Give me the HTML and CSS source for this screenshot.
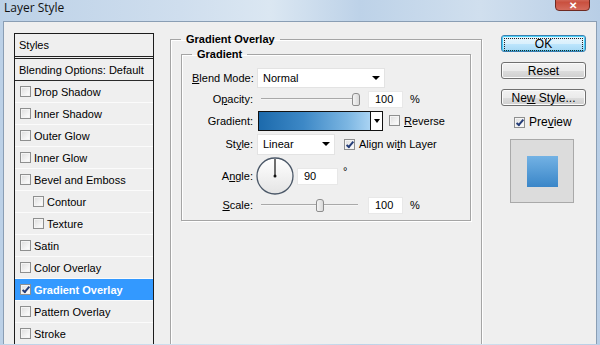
FILE: index.html
```html
<!DOCTYPE html>
<html>
<head>
    <title>Layer Style</title>
    <link rel="stylesheet" href="styles.css">
</head>
<body>
    <div class="window">
        <div class="titlebar">
            <span class="title">Layer Style</span>
            <div class="close-btn">&#x2715;</div>
        </div>

        <div class="client">
            <div class="styles-list">
                <div class="list-head">Styles</div>
                <div class="list-item blending">Blending Options: Default</div>
                <div class="list-item"><span class="cb"></span>Drop Shadow</div>
                <div class="list-item"><span class="cb"></span>Inner Shadow</div>
                <div class="list-item"><span class="cb"></span>Outer Glow</div>
                <div class="list-item"><span class="cb"></span>Inner Glow</div>
                <div class="list-item"><span class="cb"></span>Bevel and Emboss</div>
                <div class="list-item sub"><span class="cb"></span>Contour</div>
                <div class="list-item sub"><span class="cb"></span>Texture</div>
                <div class="list-item"><span class="cb"></span>Satin</div>
                <div class="list-item"><span class="cb"></span>Color Overlay</div>
                <div class="list-item selected"><span class="cb checked"></span>Gradient Overlay</div>
                <div class="list-item"><span class="cb"></span>Pattern Overlay</div>
                <div class="list-item"><span class="cb"></span>Stroke</div>
            </div>

            <fieldset class="group outer">
                <legend>Gradient Overlay</legend>
                <fieldset class="group inner">
                    <legend>Gradient</legend>

                    <div class="row row-blend">
                        <label class="lbl"><u>B</u>lend Mode:</label>
                        <div class="select select-blend"><span>Normal</span><span class="arrow"></span></div>
                    </div>

                    <div class="row row-opacity">
                        <label class="lbl">O<u>p</u>acity:</label>
                        <div class="slider"><span class="thumb" style="left: 94px"></span></div>
                        <div class="num">100</div>
                        <span class="unit">%</span>
                    </div>

                    <div class="row row-gradient">
                        <label class="lbl">Gradient:</label>
                        <div class="gradient-pick">
                            <div class="swatch"></div>
                            <div class="pick-arrow"><span class="arrow"></span></div>
                        </div>
                        <span class="cb reverse-cb"></span>
                        <span class="cb-text"><u>R</u>everse</span>
                    </div>

                    <div class="row row-style">
                        <label class="lbl">St<u>y</u>le:</label>
                        <div class="select select-style"><span>Linear</span><span class="arrow"></span></div>
                        <span class="cb checked align-cb"></span>
                        <span class="cb-text">Align wi<u>t</u>h Layer</span>
                    </div>

                    <div class="row row-angle">
                        <label class="lbl">A<u>n</u>gle:</label>
                        <svg class="dial" width="40" height="40" viewBox="0 0 40 40">
                            <defs>
                                <linearGradient id="dialFill" x1="0" y1="0" x2="0" y2="1">
                                    <stop offset="0" stop-color="#ffffff"/>
                                    <stop offset="1" stop-color="#e4e4e4"/>
                                </linearGradient>
                            </defs>
                            <circle cx="20" cy="20" r="18" fill="url(#dialFill)" stroke="#4b5868" stroke-width="1.3"/>
                            <line x1="20" y1="20" x2="20" y2="3" stroke="#111" stroke-width="1.2"/>
                            <circle cx="20" cy="20" r="1.5" fill="#111"/>
                        </svg>
                        <div class="num num-angle">90</div>
                        <span class="degree">&deg;</span>
                    </div>

                    <div class="row row-scale">
                        <label class="lbl"><u>S</u>cale:</label>
                        <div class="slider"><span class="thumb" style="left: 58px"></span></div>
                        <div class="num">100</div>
                        <span class="unit">%</span>
                    </div>
                </fieldset>
            </fieldset>

            <div class="actions">
                <button class="btn btn-default"><span class="focus">OK</span></button>
                <button class="btn">Reset</button>
                <button class="btn">Ne<u>w</u> Style...</button>
                <div class="preview-toggle">
                    <span class="cb checked"></span>
                    <span class="cb-text">Pre<u>v</u>iew</span>
                </div>
                <div class="preview-box">
                    <div class="preview-square"></div>
                </div>
            </div>
        </div>
    </div>
</body>
</html>
```

FILE: styles.css
```css
body {
    margin: 0;
    width: 600px;
    height: 345px;
    overflow: hidden;
    font-family: 'Liberation Sans', Arial, sans-serif;
    font-size: 11px;
    color: #000;
    background: #c6d8eb;
}

u {
    text-decoration: underline;
    text-underline-offset: 1px;
}

.window {
    height: 345px;
    box-sizing: border-box;
    background: linear-gradient(90deg, #bcd1e7 0%, #cfdeee 30%, #dbe7f2 45%, #bdd2e8 60%, #d0dfee 80%, #b8cee6 100%);
    padding: 0 3px;
}

.titlebar {
    height: 21px;
    position: relative;
}

.title {
    font-family: 'Open Sans', sans-serif;
    font-size: 12px;
    line-height: 16px;
    padding-left: 1px;
    color: #111;
}

.close-btn {
    position: absolute;
    right: 7px;
    top: -8px;
    width: 33px;
    height: 17px;
    border: 1px solid #6e2a22;
    border-radius: 0 0 4px 4px;
    background: linear-gradient(#e3a39a, #c9503f 55%, #d46b5c);
    color: #fff;
    font-size: 10px;
    font-weight: bold;
    line-height: 26px;
    text-align: center;
    overflow: hidden;
}

.client {
    display: flex;
    align-items: flex-start;
    height: 323px;
    box-sizing: border-box;
    border: 1px solid #8a9eb4;
    border-bottom: none;
    background: #efefef;
    padding: 11px 0 0 10px;
    overflow: hidden;
}

/* styles list */

.styles-list {
    width: 140px;
    flex: none;
    box-sizing: border-box;
    border: 1px solid #1c1c1c;
    border-bottom: none;
    background: #efefef;
    height: 311px;
    overflow: hidden;
}

.list-head {
    height: 22px;
    line-height: 22px;
    padding-left: 4px;
    border-bottom: 3px double #222;
}

.list-item {
    height: 21px;
    display: flex;
    align-items: center;
    padding-left: 5px;
    border-bottom: 1px solid #fbfbfb;
    white-space: nowrap;
}

.list-item.blending {
    padding-left: 4px;
    border-bottom: 1px solid #2a2a2a;
}

.list-item.sub {
    padding-left: 18px;
}

.list-item .cb {
    margin-right: 3px;
}

.list-item.selected {
    background: #3399ff;
    color: #fff;
    font-weight: bold;
}

.cb {
    display: inline-block;
    flex: none;
    width: 9px;
    height: 9px;
    border: 1px solid #8e8f8f;
    background: linear-gradient(135deg, #dcdcdc, #f6f6f6 70%, #ffffff);
    box-shadow: inset 0 0 0 1px #f4f4f4;
    position: relative;
}

.cb.checked::after {
    content: '';
    position: absolute;
    left: 3px;
    top: 0;
    width: 2px;
    height: 6px;
    border: solid #253d78;
    border-width: 0 2px 2px 0;
    transform: rotate(40deg);
}

.cb-text {
    margin-left: 4px;
    white-space: nowrap;
}

/* group boxes */

.group {
    margin: 0;
    border: 1px solid #a5a5a5;
    box-shadow: 1px 1px 0 #ffffff, inset 1px 1px 0 #ffffff;
}

.group legend {
    font-weight: bold;
    line-height: 13px;
    padding: 0 5px;
}

.group.outer {
    margin-left: 16px;
    width: 311px;
    height: 320px;
    box-sizing: border-box;
    padding: 2px 10px 0 10px;
    flex: none;
}

.group.inner {
    width: 290px;
    box-sizing: border-box;
    padding: 6px 0 6px 10px;
}

.row {
    display: flex;
    align-items: center;
}

.row-blend { height: 22px; }
.row-opacity { height: 20px; }
.row-gradient { height: 23px; }
.row-style { height: 24px; }
.row-angle { height: 40px; }
.row-scale { height: 18px; }

.lbl {
    width: 61px;
    flex: none;
    text-align: right;
    margin-right: 4px;
    white-space: nowrap;
}

.select {
    height: 20px;
    box-sizing: border-box;
    background: #fff;
    border: 1px solid #e3e3e3;
    display: flex;
    align-items: center;
    justify-content: space-between;
    padding: 0 4px 0 5px;
}

.select-blend { width: 128px; }
.select-style { width: 78px; height: 21px; }

.arrow {
    width: 0;
    height: 0;
    border-left: 4px solid transparent;
    border-right: 4px solid transparent;
    border-top: 4px solid #000;
}

.slider {
    position: relative;
    width: 97px;
    height: 14px;
    margin: 0 10px 0 4px;
}

.slider::before {
    content: '';
    position: absolute;
    left: 0;
    right: 0;
    top: 6px;
    border-top: 1px solid #a9a9a9;
    border-bottom: 1px solid #f6f6f6;
}

.thumb {
    position: absolute;
    top: 1px;
    width: 6px;
    height: 11px;
    margin-left: -3px;
    border: 1px solid #8d8d8d;
    border-radius: 3px 3px 2px 2px;
    background: linear-gradient(90deg, #f4f4f4, #d9d9d9);
}

.num {
    width: 35px;
    height: 17px;
    box-sizing: border-box;
    background: #fff;
    border: 1px solid #e8e8e8;
    padding-left: 6px;
    line-height: 15px;
}

.unit {
    margin-left: 7px;
}

.gradient-pick {
    display: flex;
    margin-left: 1px;
    height: 20px;
}

.swatch {
    width: 111px;
    border: 1px solid #111;
    background: linear-gradient(90deg, #1c6aac 0%, #3d88c6 40%, #7cb6e2 80%, #a9d3f3 100%);
}

.pick-arrow {
    width: 11px;
    border: 1px solid #111;
    border-left: none;
    background: #fff;
    display: flex;
    align-items: center;
    justify-content: center;
}

.pick-arrow .arrow {
    border-width: 4px 3px 0 3px;
}

.reverse-cb {
    margin-left: 6px;
}

.align-cb {
    margin-left: 9px;
}

.dial {
    flex: none;
    margin-left: -2px;
}

.num-angle {
    width: 41px;
    margin-left: 2px;
}

.degree {
    margin-left: 5px;
    align-self: flex-start;
    margin-top: 9px;
}

/* right column */

.actions {
    margin-left: 19px;
    width: 85px;
    display: flex;
    flex-direction: column;
    align-items: stretch;
    padding-top: 2px;
}

.btn {
    height: 17px;
    padding: 0;
    margin-bottom: 10px;
    font-family: 'Liberation Sans', Arial, sans-serif;
    font-size: 12px;
    color: #000;
    border: 1px solid #707070;
    border-radius: 3px;
    background: linear-gradient(#f2f2f2 0%, #ebebeb 50%, #dddddd 51%, #cfcfcf 100%);
    box-shadow: inset 0 0 0 1px #fbfbfb;
}

.btn-default {
    border-color: #3c7fb1;
    background: linear-gradient(#eaf6fd 0%, #d9f0fc 50%, #bee6fd 51%, #a7d9f5 100%);
    box-shadow: inset 0 0 0 1px #48d2f8;
    padding: 2px;
}

.btn-default .focus {
    display: block;
    height: 11px;
    line-height: 11px;
    border: 1px dotted #222;
}

.preview-toggle {
    display: flex;
    align-items: center;
    margin: -1px 0 0 13px;
    font-size: 12px;
}

.preview-box {
    margin: 10px 0 0 9px;
    width: 64px;
    height: 64px;
    box-sizing: border-box;
    border: 1px solid #a9a9a9;
    background: #dcdcdc;
    display: flex;
    align-items: center;
    justify-content: center;
}

.preview-square {
    width: 31px;
    height: 31px;
    background: linear-gradient(#73b2e4, #3a86c8);
}
```
